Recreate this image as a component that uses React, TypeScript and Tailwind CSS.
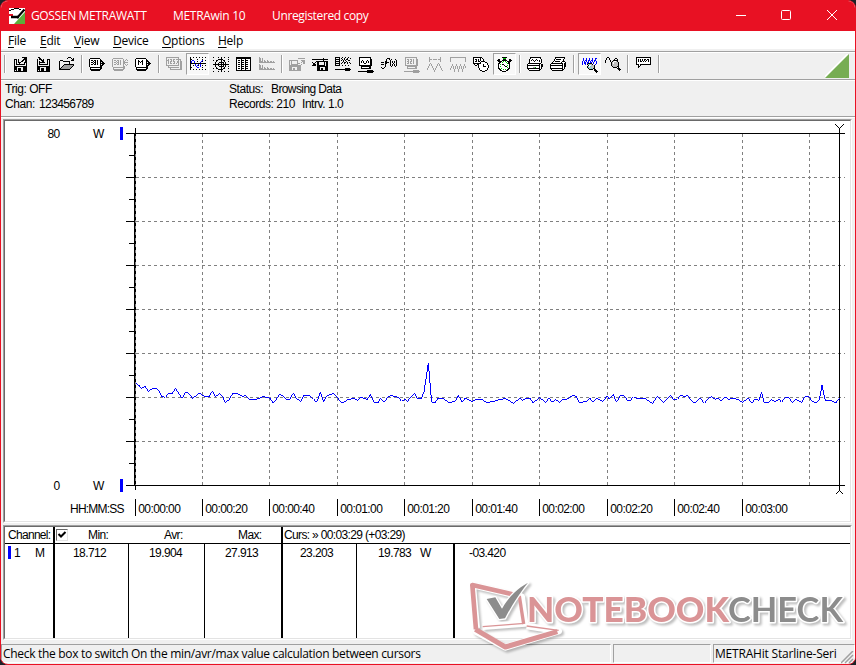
import { ReactNode } from 'react'
import clsx from 'clsx'

const INK: Record<string, string> = {
  '#': '#000000',
  g: '#a0a0a0',
  b: '#0000ff',
  w: '#ffffff',
  G: '#00c000',
  c: '#40e0e0',
  s: '#c0c0c0',
}

// 16px toolbar bitmaps, one character per pixel
const ICONS: Record<string, string[]> = {
  saveOut: [
    '........#####...',
    '..........###...',
    '###.#....####...',
    '#.#.#...##.##...',
    '#.#.#..##..##...',
    '#.#.###...###...',
    '#.#..#....#.#...',
    '#.#########.#...',
    '#...........#...',
    '#############...',
    '###......####...',
    '###.###..####...',
    '###.###..####...',
    '#.#.###..####...',
    '#############...',
  ],
  saveIn: [
    '.##.............',
    '..##............',
    '#.###.#...###...',
    '#...###...#.#...',
    '#.#..##...#.#...',
    '#.######..#.#...',
    '#.#.......#.#...',
    '#.#########.#...',
    '#...........#...',
    '#############...',
    '###......####...',
    '###.###..####...',
    '###.###..####...',
    '#.#.###..####...',
    '#############...',
  ],
  open: [
    '..........###...',
    '.........#...#.#',
    '..............##',
    '..###........###',
    '.#...#######....',
    '.#.........#....',
    '.#.........#....',
    '.#....##########',
    '.#...#ggggggggg#',
    '.#..#ggggggggg#.',
    '.#.#ggggggggg#..',
    '.##ggggggggg#...',
    '.###########....',
  ],
  read: [
    '',
    '.##########.....',
    '#wwwwwwwwww#....',
    '#w##w##w#ww##...',
    '#www#w#w#ww###..',
    '#w##w##w#ww#.##.',
    '#www#w#w#ww#####',
    '#w##w##w#ww#.##.',
    '#wwwwwwwwww###..',
    '#wwwwwwwwww##...',
    '.############...',
    '.#wwwwwwwww##...',
    '.###########....',
    '..#########.....',
  ],
  readOff: [
    '',
    '.gggggggggg.....',
    'g..........g..g.',
    'g.gg.gg.g..g.g.g',
    'g...g.g.g..gg...',
    'g.gg.gg.g..ggggg',
    'g...g.g.g..gg...',
    'g.gg.gg.g..g.g.g',
    'g..........g..g.',
    'g..........gg...',
    '.gggggggggggg...',
    '.g.........gg...',
    '.ggggggggggg....',
    '..ggggggggg.....',
  ],
  memory: [
    '',
    '.##########.....',
    '#wwwwwwwwww#....',
    '#ww#www#www##...',
    '#ww##w##www###..',
    '#ww#w#w#www#.##.',
    '#ww#www#www#####',
    '#ww#www#www#.##.',
    '#wwwwwwwwww###..',
    '#wwwwwwwwww##...',
    '.############...',
    '.#wwwwwwwww##...',
    '.###########....',
    '..#########.....',
  ],
  digits: [
    'ggggggggggggg...',
    'g...........g...',
    'g.g.gg.gg.ggggg.',
    'ggg..g.g....g.g.',
    'g.g.gg.gg..gg.gg',
    'g.g.g...g..gg.gg',
    'g.g.gg.gg.g.g.gg',
    'g...........g.gg',
    'ggggggggggggg.gg',
    '..g...........gg',
    '..ggggggggggg.gg',
    '....g.........gg',
    '....gggggggggggg',
  ],
  curve: [
    '#..#..#..#..#..#',
    '#...............',
    '##.....#....#...',
    '#.bb........b..#',
    '#b..b..#...b#...',
    '#b..b.....b.....',
    '################',
    '#....b..b.b.....',
    '#..#.b.b#.b.#..#',
    '#.....b...b.....',
    '##.....bb...#...',
    '#...............',
    '#..#..#..#..#..#',
  ],
  target: [
    '#....#..#..#...#',
    '........#.......',
    '.....#####.....#',
    '#..##...#.##....',
    '...#....#..#...#',
    '..#...#####.#...',
    '..#..#..#.#.#...',
    '################',
    '..#..#..#.#.#...',
    '..#...#####.#..#',
    '...#....#..#....',
    '#..##...#.##...#',
    '.....#####......',
    '........#.......',
    '#....#..#..#...#',
  ],
  table: [
    '###############.',
    '###############.',
    '#wwww#www#wwww#.',
    '#w##w###w###ww#.',
    '#wwww#www#wwww#.',
    '#w##w###w###ww#.',
    '#wwww#www#wwww#.',
    '#w##w###w###ww#.',
    '#wwww#www#wwww#.',
    '#w##w###w###ww#.',
    '#wwww#www#wwww#.',
    '#w##w###w###ww#.',
    '#wwww#www#wwww#.',
    '###############.',
  ],
  histogram: [
    'g...............',
    'gg.g............',
    'gg.g............',
    'gg.g.g..g.......',
    'gggg.gg.gg.gg.g.',
    'gggggggggggggggg',
    '................',
    'g...............',
    'gg.g............',
    'gg.g............',
    'gg.g.g..g.......',
    'gggg.gg.gg.gg.g.',
    'gggggggggggggggg',
  ],
  exportOff: [
    '................',
    '.........ggggggg',
    '................',
    'ggggggggg...gggg',
    'g.g.....g....ggg',
    'g.g.....g...g.gg',
    'g.g.....ggg...gg',
    'g.ggggggg...g...',
    'gggggggggggg....',
    'gggggggggggg....',
    'ggg.....gggg....',
    'ggg.gg..gggg....',
    'ggg.gg..gggg....',
    'gggggggggggg....',
  ],
  importIn: [
    '................',
    '...........#....',
    '################',
    '...........#....',
    '....############',
    '#..#.##.....#.##',
    '.##..##.....#.##',
    '.###.##.....#.##',
    '####.########.##',
    '.....###########',
    '.....###.....###',
    '.....###.##..###',
    '.....###.##..###',
    '.....###########',
  ],
  scatter: [
    '#####..#..#..#..',
    '#...#.#..#..#..#',
    '#####..#.#.##...',
    '#...#.#.#.#..##.',
    '#####...#..#....',
    '#...#..#.##.#.#.',
    '#####.#..#..#..#',
    '#...#...........',
    '#####..#..#..#..',
    '................',
    '................',
    '..........#####.',
    '################',
    '..........#####.',
  ],
  scope: [
    '.############...',
    '.#wwwwwwwwww#...',
    '.#wwwwwwwwww##..',
    '.#ww#wwww#ww##..',
    '.#w#w#ww#w#w##..',
    '.#w#w#ww#w#w##..',
    '.#wwww##wwww##..',
    '.#wwwwwwwwww##..',
    '.#############..',
    '...##########...',
    '...#wwwwwww##...',
    '...##########...',
    '................',
    '.........######.',
    '################',
    '.........######.',
  ],
  formula: [
    '................',
    '......###.......',
    '.....#..#.#...#.',
    '.....#...#.....#',
    '....##...#.#.#.#',
    '###.####.#.#.#.#',
    '....##...#..#..#',
    '###.#....#.#.#.#',
    '....#....#.#.#.#',
    '....#.....#...#.',
    '#..#............',
    '.##.............',
  ],
  meterOff: [
    '.gggggggggggg...',
    '.g..........g...',
    '.g.gg.gg.g..gg..',
    '.g..g..g.g..gg..',
    '.g.gg.gg.g..gg..',
    '.g..g.g..g..gg..',
    '.g.gg.gg.g..gg..',
    '.g..........gg..',
    '.ggggggggggggg..',
    '...gggggggggg...',
    '...g.......gg...',
    '...gggggggggg...',
    '................',
    '.........gggggg.',
    'gggggggggggggggg',
    '.........gggggg.',
  ],
  waveOff: [
    '..g..........g..',
    '..g..........g..',
    '..ggg.gggg.ggg..',
    '..g..........g..',
    '..g..........g..',
    '................',
    '...g.......g....',
    '..g.g.....g.g...',
    '..g.g.....g.g...',
    '.g...g...g...g..',
    '.g...g...g...g..',
    'g.....g.g.....g.',
    'g.....g.g.....g.',
    '.......g.......g',
    '.......g........',
  ],
  burstOff: [
    'gggggggggggggggg',
    'g..............g',
    'g..............g',
    'g..............g',
    'g..............g',
    '................',
    '................',
    '..g...g...g...g.',
    '..g...g...g...g.',
    '.g.g.g.g.g.g.g.g',
    '.g.g.g.g.g.g.g.g',
    'g..g.g.g.g.g.g..',
    'g...g...g...g...',
    '....g...g...g...',
    '....g...g...g...',
  ],
  schedule: [
    '#########.......',
    '#wwwwww#w#......',
    '#w##w#w#ww#.....',
    '#ww#w#w#ww#.....',
    '#w##w##w####....',
    '#wwwwww#wwww##..',
    '########wwwwww#.',
    '.#ww##wwww#www#.',
    '..##.#wwww#wwww#',
    '.....#wwww###ww#',
    '.....#wwwwwwwww#',
    '......#wwwwwww#.',
    '......#wwwwwww#.',
    '.......##www##..',
    '.........###....',
  ],
  stopwatch: [
    '.....#####......',
    '......GGG.......',
    '.##...###...##..',
    '###..#####..###.',
    '.####wGwGw####..',
    '..##wGwwwGw##...',
    '.##wwwwwwwG##...',
    '.#wGw##wwwww#...',
    '.#wwwww#wwGw#...',
    '.#wGwwww##ww#...',
    '.#wwwwwwwwGw#...',
    '.##wGwwwwww##...',
    '..##wwGwGw##....',
    '...##wwww##.....',
    '.....####.......',
  ],
  printChart: [
    '...###########..',
    '...#wwwwwwwww#..',
    '..#ww#www#wwww#.',
    '..#w#w#w#w#w#w#.',
    '..#wwww#wwww#w#.',
    '..#wwwwwwwwwww#.',
    '.#############..',
    '#wwwwwwwwwww#w##',
    '#############w##',
    '#wwwwwwwwwww#w##',
    '#wwwwwggGwww#w#.',
    '#############w#.',
    '.#wwwwwwwwww##..',
    '..###########...',
  ],
  printText: [
    '.....##########.',
    '.....#wwwwwwww#.',
    '....#w#####ww#..',
    '....#wwwwwwww#..',
    '...#w#####ww###.',
    '..#wwwwwwww#www#',
    '.############w##',
    '#wwwwwwwwwww#w##',
    '#############w##',
    '#wwwwwwwwwww#w##',
    '#wwwwwwwwwww#w#.',
    '#############w#.',
    '.#wwwwwwwwww##..',
    '..###########...',
  ],
  zoomBurst: [
    '................',
    '.b..b..b..b..bb.',
    '.b..b..b..b..b..',
    '.b.bb.bb.bb.bb..',
    'b.b.b.b.b.b.b.b.',
    'b.bb.bb.bb.b..b.',
    'b.bb.b####.b..b.',
    'b..b.#scss#..b..',
    '......#wwsss#...',
    '.....#swcsss#...',
    '.....#csssss#...',
    '......#sscs##...',
    '.......####.##..',
    '............###.',
    '.............###',
    '..............#.',
  ],
  zoomWave: [
    '..##............',
    '.#..#.....##....',
    '.#..#....#..#...',
    '#....#..#####...',
    '#....#.#swws#...',
    '#.....#swssss#..',
    '......#swssss#..',
    '......#ssssss#..',
    '......#ssssss#..',
    '.......#ssss##..',
    '........####.#..',
    '............###.',
    '.............###',
    '..............#.',
  ],
  note: [
    '###############.',
    '#wwwwwwwwwwwww#.',
    '#w#w#w#w##w##w#.',
    '#w#w#w#w#w#w#w#.',
    '#w#w##w#w#ww#w#.',
    '#wwwwwwwwwwwww#.',
    '#wwwwwwwwwwwww#.',
    '###w###########.',
    '..#w#...........',
    '..##............',
    '..#.............',
  ],
}

function PixelIcon({ name }: { name: string }) {
  const cells: ReactNode[] = []
  ICONS[name].forEach((row, y) => {
    for (let x = 0; x < row.length; ) {
      const ch = row[x]
      let end = x + 1
      while (row[end] === ch) end++
      if (ch !== '.') {
        cells.push(<rect key={`${x}-${y}`} x={x} y={y} width={end - x} height={1} fill={INK[ch]} />)
      }
      x = end
    }
  })
  return (
    <svg width="16" height="16" viewBox="0 0 16 16" shapeRendering="crispEdges">
      {cells}
    </svg>
  )
}

function Tool({ name, pressed, className }: { name: string; pressed?: boolean; className?: string }) {
  return (
    <button
      className={clsx(
        'flex h-[22px] w-[23px] shrink-0 items-start border pt-[3px] pl-[3px]',
        pressed
          ? 'border-t-[#a0a0a0] border-r-white border-b-white border-l-[#a0a0a0] bg-[#f8f8f8]'
          : 'border-transparent',
        className,
      )}
    >
      <PixelIcon name={name} />
    </button>
  )
}

function Divider({ className }: { className?: string }) {
  return <div className={clsx('mt-0.5 h-[18px] w-0.5 shrink-0 border-r border-l border-l-[#a0a0a0] border-r-white', className)} />
}

function Toolbar() {
  return (
    <div className="flex h-[26px] pl-[3px]">
      <Divider className="mr-1" />
      <Tool name="saveOut" />
      <Tool name="saveIn" />
      <Tool name="open" className="mr-0.5 -ml-0.5" />
      <Divider className="mr-0.5 ml-[2px]" />
      <Tool name="read" />
      <Tool name="readOff" />
      <Tool name="memory" />
      <Divider className="mr-0.5 ml-1" />
      <Tool name="digits" className="mr-px" />
      <Tool name="curve" pressed />
      <Tool name="target" />
      <Tool name="table" />
      <Tool name="histogram" />
      <Divider className="mr-0.5 ml-[3px]" />
      <Tool name="exportOff" />
      <Tool name="importIn" />
      <Tool name="scatter" />
      <Tool name="scope" />
      <Tool name="formula" />
      <Tool name="meterOff" />
      <Tool name="waveOff" />
      <Tool name="burstOff" />
      <Tool name="schedule" />
      <Tool name="stopwatch" pressed className="ml-px" />
      <Divider className="mr-0.5 ml-[3px]" />
      <Tool name="printChart" />
      <Tool name="printText" />
      <Divider className="mr-[3px] ml-1" />
      <Tool name="zoomBurst" pressed />
      <Tool name="zoomWave" />
      <Divider className="mr-[3px] ml-[3px]" />
      <Tool name="note" />
      <Divider className="ml-[3px]" />
      <svg className="mt-px mr-[5px] ml-auto" width="25" height="24" viewBox="0 0 25 24">
        <path d="M-1 24 23 0" stroke="#fff" strokeWidth="2" />
        <path d="M24 0V24H0Z" fill="#77ad53" />
      </svg>
    </div>
  )
}

function TitleBar() {
  return (
    <div className="flex h-[30px] items-center pl-2 font-['Open_Sans',sans-serif] text-[12px] text-white">
      <svg width="16" height="16" viewBox="0 0 16 16">
        <path d="M0 0H16V16H0Z" fill="#fff" />
        <path d="M16 4V16H5Z" fill="#5cae3a" />
        <path d="M0 2.500H2M2 1.500H5M5 .5H10M10 1.500H12" fill="none" stroke="#000" shapeRendering="crispEdges" />
        <path d="M0 7H4" stroke="#e81123" strokeWidth="2" />
        <path d="M2 9H10" stroke="#000" strokeWidth="2.500" />
        <path d="M8 10 15.500 1.500" stroke="#000" strokeWidth="2.200" />
      </svg>
      <span className="ml-1.5 w-[142px] whitespace-nowrap tracking-[-0.35px]">GOSSEN METRAWATT</span>
      <span className="w-[99px] whitespace-nowrap tracking-[-0.3px]">METRAwin 10</span>
      <span className="whitespace-nowrap tracking-[-0.35px]">Unregistered copy</span>
      <svg className="ml-auto" width="120" height="30" viewBox="0 0 120 30" fill="none" stroke="#fff">
        <path d="M1 14.500H11" />
        <rect x="46.500" y="9.500" width="9" height="9" rx="1" />
        <path d="M92 9 102 19M102 9 92 19" />
      </svg>
    </div>
  )
}

const MENU = [
  { label: 'File', width: 'w-8' },
  { label: 'Edit', width: 'w-[34px]' },
  { label: 'View', width: 'w-[39px]' },
  { label: 'Device', width: 'w-[49px]' },
  { label: 'Options', width: 'w-14' },
  { label: 'Help', width: 'w-10' },
]

function MenuBar() {
  return (
    <div className="flex h-[18px] items-center bg-white pl-[7px] font-['Open_Sans',sans-serif] text-[12px] tracking-[-0.25px]">
      {MENU.map(({ label, width }) => (
        <span key={label} className={clsx('pt-0.5', width)}>
          <span className="underline underline-offset-2">{label[0]}</span>
          {label.slice(1)}
        </span>
      ))}
    </div>
  )
}

// Recorded trace, in thirds of a pixel from each strip's origin
const TRACE = [
  {
    x: 120,
    points:
      '48,130 57,136 64,145 75,139 85,154 98,146 111,146 117,152 124,168 136,172 146,160 157,161 166,145 176,160 187,175 196,156 207,161 217,175 228,167 238,160 252,168 267,170 277,153 286,170 298,161 308,170 316,187 327,180 338,160 352,160 368,170 377,166 388,178 410,178 430,170 450,175 460,190 479,163 490,168 499,178 509,178 520,160 529,175 542,185 552,166 568,167 580,176 590,187 601,157 611,185 621,167 640,161 652,172 662,187 672,187 685,178 690,178',
  },
  {
    x: 350,
    points:
      '0,178 10,175 22,181 34,172 52,179 61,163 74,189 84,189 92,175 103,187 112,173 123,166 145,172 155,184 165,177 173,184 182,171 193,160 202,175 214,177 222,155 235,70 245,187 254,189 264,175 280,175 296,188 315,184 325,166 336,186 346,174 366,185 377,178 395,178 410,187 432,185 445,179 467,176 490,190 509,175 518,181 528,175 540,175 549,189 568,173 587,187 597,174 606,187 617,178 628,187 638,178 653,177 668,166 678,169 688,187 710,185 720,174',
  },
  {
    x: 590,
    points:
      '0,175 10,187 20,174 30,181 40,184 50,168 58,177 70,163 79,187 92,166 102,167 112,181 122,180 131,170 142,177 165,176 188,190 202,169 220,187 242,166 252,180 262,178 272,166 283,170 293,166 303,180 315,190 330,175 344,190 355,175 365,170 375,178 385,175 394,183 404,170 416,178 430,175 443,178 457,187 475,175 485,190 494,178 507,181 515,157 523,189 533,189 545,178 555,187 566,177 575,187 585,173 596,173 607,187 617,178 635,187 646,169 657,170 666,184 678,189 688,178 696,136 706,183 720,181 738,188 748,175',
  },
]

const COLUMNS = [202, 269, 337, 404, 472, 539, 607, 674, 742, 809]
const ROWS = [177, 221, 265, 309, 353, 397, 441]
const TIMES = ['00:00:00', '00:00:20', '00:00:40', '00:01:00', '00:01:20', '00:01:40', '00:02:00', '00:02:20', '00:02:40', '00:03:00']

function Chart() {
  return (
    <svg
      className="block font-['Liberation_Sans',sans-serif] text-[12px] tracking-[-0.6px]"
      width="845"
      height="400"
      viewBox="5 121 845 400"
    >
      <g shapeRendering="crispEdges" fill="none" stroke="#000">
        <g stroke="#808080" strokeDasharray="3 3">
          {COLUMNS.map((x) => (
            <path key={x} d={`M${x + 0.5} 134V485`} />
          ))}
          {ROWS.map((y) => (
            <path key={y} d={`M136 ${y + 0.5}H845`} />
          ))}
        </g>
        <path d="M126 133.500H845M126 485.500H845M134.500 133V486M839.500 133V486" />
        <path d="M135.500 128V490" />
        <path d="M135.500 136V485" stroke="#808080" strokeDasharray="3 3" />
        {ROWS.map((y) => (
          <path key={y} d={`M126 ${y + 0.5}H134`} />
        ))}
        {[133, ...ROWS].map((y) => (
          <path key={y} d={`M129 ${y + 22.5}H134`} />
        ))}
        <path d="M835.500 124.500 839.500 128.500 843.500 124.500M839.500 128V133M835.500 494.500 839.500 490.500 843.500 494.500M839.500 486V490" />
        {[135, ...COLUMNS.slice(0, 9)].map((x) => (
          <path key={x} d={`M${x + 0.5} 499V516`} />
        ))}
        {TRACE.map(({ x, points }) => (
          <g key={x} transform={`translate(${x} 340) scale(0.33333)`}>
            <polyline points={points} stroke="#0000ff" strokeWidth="3" />
          </g>
        ))}
      </g>
      <path d="M120 127H123V140H120ZM120 479H123V492H120Z" fill="#0000ff" />
      <text x="47.500" y="138">80</text>
      <text x="93" y="138">W</text>
      <text x="53.500" y="490">0</text>
      <text x="93" y="490">W</text>
      <text x="70" y="513" textLength="54">HH:MM:SS</text>
      {TIMES.map((time, i) => (
        <text key={time} x={[135, ...COLUMNS][i] + 3.3} y="513">
          {time}
        </text>
      ))}
    </svg>
  )
}

function Sunken({ className, children }: { className?: string; children: ReactNode }) {
  return (
    <div className={clsx('border border-t-[#a0a0a0] border-r-white border-b-white border-l-[#a0a0a0]', className)}>
      <div className="h-full border border-t-[#696969] border-r-[#e3e3e3] border-b-[#e3e3e3] border-l-[#696969] bg-white">
        {children}
      </div>
    </div>
  )
}

function Readings() {
  return (
    <div className="flex h-full flex-col text-[12px] leading-[16px] tracking-[-0.6px] whitespace-nowrap">
      <div className="flex h-[17px] border-b border-black">
        <div className="w-[50px] border-r-2 border-black pl-[3px] tracking-[-0.7px]">Channel:</div>
        <div className="flex w-[228px] border-r-2 border-black pl-px">
          <div className="mt-0.5 h-3 w-3 border border-t-[#696969] border-r-[#e3e3e3] border-b-[#e3e3e3] border-l-[#696969]">
            <svg width="10" height="10" viewBox="0 0 10 10" fill="none" stroke="#000" strokeWidth="2">
              <path d="M1.500 4 4 6.500 8.500 2" />
            </svg>
          </div>
          <div className="ml-5 w-[76px]">Min:</div>
          <div className="w-[74px]">Avr:</div>
          <div>Max:</div>
        </div>
        <div className="pl-px tracking-[-0.65px]">Curs: » 00:03:29 (+03:29)</div>
      </div>
      <div className="flex flex-1 leading-[18px]">
        <div className="flex w-[50px] border-r-2 border-black pl-[3px]">
          <span className="mt-0.5 h-[13px] w-[3px] bg-[#0000ff]" />
          <span className="ml-[3px] w-[21px]">1</span>
          <span>M</span>
        </div>
        <div className="w-[74px] border-r border-black pl-[18px]">18.712</div>
        <div className="w-[76px] border-r border-black pl-5">19.904</div>
        <div className="w-[78px] border-r-2 border-black pl-5">27.913</div>
        <div className="w-[74px] border-r border-black pl-[17px]">23.203</div>
        <div className="flex w-[98px] border-r-2 border-black pl-[21px]">
          <span className="w-[42px]">19.783</span>
          <span>W</span>
        </div>
        <div className="pl-3.5">-03.420</div>
      </div>
    </div>
  )
}

function StatusBar() {
  const pane = 'h-[19px] border border-t-[#a0a0a0] border-l-[#a0a0a0] border-r-white border-b-white pl-px'
  return (
    <div className="mt-1 flex h-5 gap-0.5 font-['Open_Sans',sans-serif] text-[12px] leading-[18px] tracking-[-0.31px] whitespace-nowrap">
      <div className={clsx(pane, 'w-[610px]')}>Check the box to switch On the min/avr/max value calculation between cursors</div>
      <div className={clsx(pane, 'w-[98px]')} />
      <div className={clsx(pane, 'flex flex-1 tracking-[-0.2px]')}>
        METRAHit Starline-Seri
        <svg className="mt-1.5 ml-auto" width="13" height="13" viewBox="0 0 13 13" stroke="#a0a0a0" strokeWidth="1.5">
          <path d="M0 12 12 0M4 12 12 4M8 12 12 8" />
        </svg>
      </div>
    </div>
  )
}

function Watermark() {
  return (
    <svg className="absolute top-[574px] left-[461px] drop-shadow-[2px_2px_1px_rgba(0,0,0,0.25)]" width="390" height="84" viewBox="462 575 390 84">
      <g transform="translate(456 570) scale(0.33333)" fill="none" strokeLinejoin="round">
        <path d="M62 174 50 45 197 80 207 160 80 170M58 175 60 185 148 232 308 183 212 168" stroke="#fff" strokeWidth="20" />
        <path d="M60 178 49 45 192 78" stroke="#da9496" strokeWidth="14" />
        <path d="M190 78 203 162" stroke="#da9496" strokeWidth="10" />
        <path d="M58 178 148 231 304 185" stroke="#da9496" strokeWidth="15" />
        <path d="M80 170 205 160M212 168 308 181" stroke="#da9496" strokeWidth="4" />
        <path d="M92 87 118 82 138 116C160 78 186 54 216 38 190 70 165 110 147 145L130 147Z" fill="#8c8c8c" stroke="#fff" strokeWidth="8" paintOrder="stroke" />
      </g>
      <g className="font-['Lato',sans-serif]" fontSize="34" stroke="#fff" strokeWidth="3" paintOrder="stroke" strokeLinejoin="round">
        <text x="527" y="621.500" fill="#da9496" fontWeight="900" textLength="202" lengthAdjust="spacingAndGlyphs">NOTEBOOK</text>
        <text x="728" y="621.500" fill="#8c8c8c" fontWeight="700" textLength="115" lengthAdjust="spacingAndGlyphs">CHECK</text>
      </g>
    </svg>
  )
}

export default function App() {
  return (
    <div className="h-[665px] w-[856px] bg-[#1c2227]">
      <div className="relative flex h-full flex-col overflow-hidden rounded-lg border border-[#e81123] bg-[#f0f0f0] font-['Liberation_Sans',sans-serif] text-black">
        <div className="bg-[#e81123]">
          <TitleBar />
        </div>
        <MenuBar />
        <div className="mt-0.5 border-t border-b border-t-[#a0a0a0] border-b-white" />
        <Toolbar />
        <div className="border-t border-b border-t-[#a0a0a0] border-b-white" />
        <div className="flex h-[35px] pt-px pl-1 text-[12px] leading-[15px] tracking-[-0.6px] whitespace-nowrap">
          <div className="w-[224px]">
            <div className="tracking-[-0.45px]">Trig: OFF</div>
            <div className="flex">
              <span className="w-[34px] tracking-[-0.45px]">Chan:</span>
              <span>123456789</span>
            </div>
          </div>
          <div>
            <div className="flex">
              <span className="w-[42px] tracking-[-0.45px]">Status:</span>
              <span>Browsing Data</span>
            </div>
            <div className="flex tracking-[-0.45px]">
              <span className="w-[73px]">Records: 210</span>
              <span>Intrv. 1.0</span>
            </div>
          </div>
        </div>
        <div className="border-t border-b border-t-[#a0a0a0] border-b-white" />
        <Sunken className="mt-px mr-[3px] ml-0.5 h-[404px]">
          <Chart />
        </Sunken>
        <Sunken className="mt-0.5 mr-[3px] ml-0.5 h-[115px]">
          <Readings />
        </Sunken>
        <StatusBar />
        <Watermark />
      </div>
    </div>
  )
}
